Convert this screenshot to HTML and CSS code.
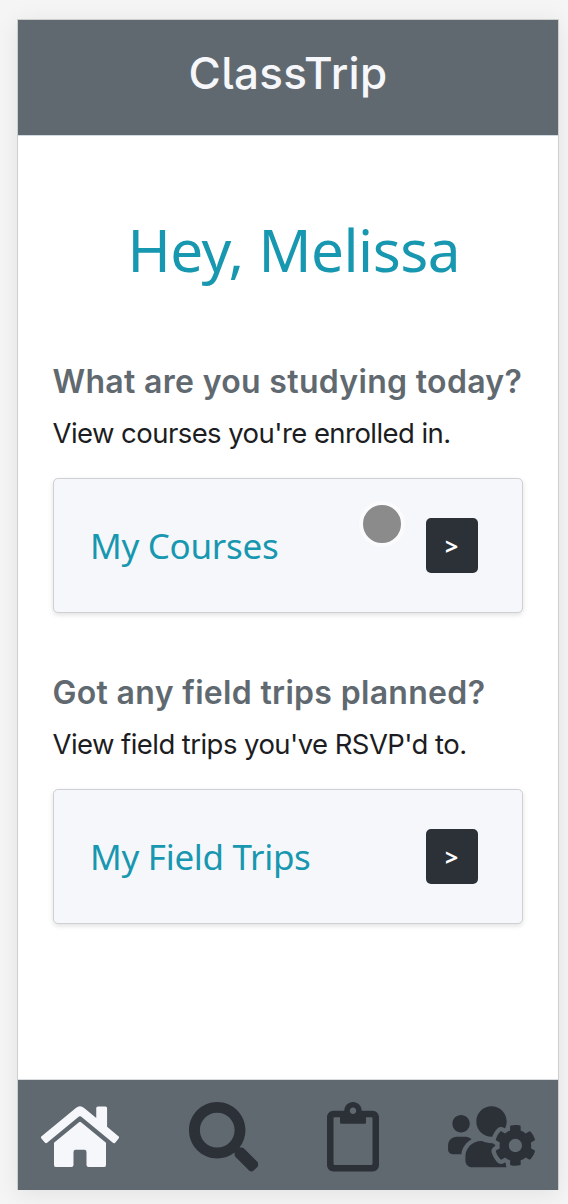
FILE: index.html
```html
<!DOCTYPE html>
<html lang="en">
<head>
<meta charset="utf-8">
<title>ClassTrip</title>
<link rel="stylesheet" href="styles.css">
</head>
<body>
<div class="phone">
  <header class="topbar"><span class="brand">ClassTrip</span></header>
  <main class="content">
    <h1 class="greeting">Hey, Melissa</h1>
    <section class="section">
      <h2 class="question">What are you studying today?</h2>
      <p class="hint">View courses you're enrolled in.</p>
      <div class="card">
        <span class="card-title">My Courses</span>
        <button class="go">&gt;</button>
        <span class="touch"></span>
      </div>
    </section>
    <section class="section">
      <h2 class="question">Got any field trips planned?</h2>
      <p class="hint">View field trips you've RSVP'd to.</p>
      <div class="card">
        <span class="card-title">My Field Trips</span>
        <button class="go">&gt;</button>
      </div>
    </section>
  </main>
  <nav class="tabs">
    <svg class="tab home" viewBox="0 0 576 512"><path d="M280.37 148.26L96 300.11V464a16 16 0 0 0 16 16l112.06-.29a16 16 0 0 0 15.92-16V368a16 16 0 0 1 16-16h64a16 16 0 0 1 16 16v95.64a16 16 0 0 0 16 16.05L464 480a16 16 0 0 0 16-16V300L295.67 148.26a12.19 12.19 0 0 0-15.3 0zM571.6 251.47L488 182.56V44.05a12 12 0 0 0-12-12h-56a12 12 0 0 0-12 12v72.61L318.47 43a48 48 0 0 0-61 0L4.34 251.47a12 12 0 0 0-1.6 16.9l25.5 31A12 12 0 0 0 45.15 301l235.22-193.74a12.19 12.19 0 0 1 15.3 0L530.9 301a12 12 0 0 0 16.9-1.6l25.5-31a12 12 0 0 0-1.7-16.93z"/></svg>
    <svg class="tab search" viewBox="0 0 512 512"><path d="M505 442.7L405.3 343c-4.5-4.5-10.6-7-17-7H372c27.6-35.3 44-79.7 44-128C416 93.1 322.9 0 208 0S0 93.1 0 208s93.1 208 208 208c48.3 0 92.7-16.4 128-44v16.3c0 6.4 2.5 12.5 7 17l99.7 99.7c9.4 9.4 24.6 9.4 33.9 0l28.3-28.3c9.4-9.4 9.4-24.6.1-34zM208 336c-70.7 0-128-57.2-128-128 0-70.7 57.2-128 128-128 70.7 0 128 57.2 128 128 0 70.7-57.2 128-128 128z"/></svg>
    <svg class="tab clipboard" viewBox="0 0 384 512"><path d="M336 64h-80c0-35.3-28.7-64-64-64s-64 28.7-64 64H48C21.5 64 0 85.5 0 112v352c0 26.5 21.5 48 48 48h288c26.5 0 48-21.5 48-48V112c0-26.5-21.5-48-48-48zM192 40c13.3 0 24 10.7 24 24s-10.7 24-24 24-24-10.7-24-24 10.7-24 24-24zm144 418c0 3.3-2.7 6-6 6H54c-3.3 0-6-2.7-6-6V118c0-3.3 2.7-6 6-6h42v36c0 6.6 5.4 12 12 12h168c6.6 0 12-5.4 12-12v-36h42c3.3 0 6 2.7 6 6v340z"/></svg>
    <svg class="tab users" viewBox="0 0 640 512"><path d="M610.5 341.3c2.6-14.1 2.6-28.5 0-42.6l25.8-14.9c3-1.7 4.3-5.2 3.3-8.5-6.7-21.6-18.2-41.2-33.2-57.4-2.3-2.5-6-3.1-9-1.4l-25.8 14.9c-10.9-9.3-23.4-16.5-36.9-21.3v-29.8c0-3.4-2.4-6.4-5.7-7.1-22.3-5-45-4.8-66.2 0-3.3.7-5.7 3.7-5.7 7.1v29.8c-13.5 4.8-26 12-36.9 21.3l-25.8-14.9c-2.9-1.7-6.7-1.1-9 1.4-15 16.2-26.5 35.8-33.2 57.4-1 3.3.4 6.8 3.3 8.5l25.8 14.9c-2.6 14.1-2.6 28.5 0 42.6l-25.8 14.9c-3 1.7-4.3 5.2-3.3 8.5 6.7 21.6 18.2 41.1 33.2 57.4 2.3 2.5 6 3.1 9 1.4l25.8-14.9c10.9 9.3 23.4 16.5 36.9 21.3v29.8c0 3.4 2.4 6.4 5.7 7.1 22.3 5 45 4.8 66.2 0 3.3-.7 5.7-3.7 5.7-7.1v-29.8c13.5-4.8 26-12 36.9-21.3l25.8 14.9c2.9 1.7 6.7 1.1 9-1.4 15-16.2 26.5-35.8 33.2-57.4 1-3.3-.4-6.8-3.3-8.5l-25.8-14.9zM496 368.5c-26.8 0-48.5-21.8-48.5-48.5s21.8-48.5 48.5-48.5 48.5 21.8 48.5 48.5-21.7 48.5-48.5 48.5zM96 224c35.3 0 64-28.7 64-64s-28.7-64-64-64-64 28.7-64 64 28.7 64 64 64zm224 32c1.9 0 3.7-.5 5.6-.6 8.3-21.7 20.5-42.1 36.3-59.2 7.4-8 17.9-12.6 28.9-12.6 6.9 0 13.7 1.8 19.6 5.3l7.9 4.6c.8-.5 1.6-.9 2.4-1.4 7-14.6 11.2-30.8 11.2-48 0-61.9-50.1-112-112-112S208 82.1 208 144c0 61.9 50.1 112 112 112zm105.2 194.5c-2.3-1.2-4.6-2.6-6.8-3.9-8.2 4.8-15.3 9.8-27.5 9.8-10.9 0-21.4-4.6-28.9-12.6-18.3-19.8-32.3-43.9-40.2-69.6-10.7-34.5 24.9-49.7 25.8-50.3-.1-2.6-.1-5.2 0-7.8l-7.9-4.6c-3.8-2.2-7-5-9.8-8.1-3.3.2-6.5.6-9.8.6-24.6 0-47.6-6-68.5-16h-8.3C179.6 288 128 339.6 128 403.2V432c0 26.5 21.5 48 48 48h255.4c-3.7-6-6.2-12.8-6.2-20.3v-9.2zM173.1 274.6C161.5 263.1 145.6 256 128 256H64c-35.3 0-64 28.7-64 64v32c0 17.7 14.3 32 32 32h65.9c6.3-47.4 34.9-87.3 75.2-109.4z"/></svg>
  </nav>
</div>
</body>
</html>
```
FILE: styles.css
```css
* { box-sizing: border-box; }
body {
  margin: 0;
  height: 1204px;
  padding: 19px 9px 14px 17px;
  background: #f5f5f5;
  overflow: hidden;
  font-family: Inter, "Liberation Sans", sans-serif;
}
.phone {
  height: 1171px;
  display: flex;
  flex-direction: column;
  background: #fff;
  border: 1px solid #cdcfce;
  border-bottom: 0;
  box-shadow: 0 4px 22px rgba(0, 0, 0, 0.08);
}
.topbar {
  height: 116px;
  background: #616970;
  border-bottom: 1px solid #d3dadf;
  text-align: center;
}
.brand {
  font-size: 44px;
  font-weight: 500;
  line-height: 106px;
  letter-spacing: 0.3px;
  font-feature-settings: "cv05";
  color: #f5f7fb;
}
.content {
  flex: 1;
  display: flex;
  flex-direction: column;
  padding: 0 35px 0 34.5px;
}
.greeting {
  margin: 73px 0 0;
  height: 82px;
  font: 400 58.5px/80px "Noto Sans", "Open Sans", sans-serif;
  letter-spacing: -0.5px;
  color: #1897b0;
  text-align: center;
  padding-left: 12px;
  white-space: nowrap;
}
.section {
  height: 311px;
  padding-top: 69px;
  white-space: nowrap;
}
.question {
  margin: 0;
  font-size: 32px;
  font-weight: 600;
  line-height: 44px;
  letter-spacing: 0.32px;
  color: #616970;
}
.hint {
  margin: 7px 0 0;
  font-size: 27.5px;
  line-height: 44px;
  letter-spacing: -0.56px;
  color: #1c1d22;
}
.card {
  position: relative;
  display: flex;
  align-items: center;
  justify-content: space-between;
  height: 135px;
  margin-top: 23px;
  padding: 0 44.4px 0 36.5px;
  background: #f5f7fb;
  border: 1px solid #cfd0d3;
  border-radius: 5px;
  box-shadow: 0 2px 5px rgba(0, 0, 0, 0.12);
}
.card-title {
  font: 400 35px/48px "Noto Sans", "Open Sans", sans-serif;
  letter-spacing: -0.3px;
  color: #1897b0;
}
.go {
  width: 52px;
  height: 55px;
  padding: 2px 0 0;
  border: 0;
  border-radius: 5px;
  background: #2c3138;
  color: #fff;
  font: 700 23px/53px "Noto Sans", sans-serif;
}
.touch {
  position: absolute;
  left: 305px;
  top: 22px;
  width: 46px;
  height: 46px;
  border: 4px solid #fbfbfd;
  border-radius: 50%;
  background: #8b8b8c;
}
.tabs {
  display: flex;
  height: 111px;
  padding: 22px 0 0 23px;
  border-top: 1px solid #d9dde0;
  background: #616970;
}
.tab {
  flex: none;
  height: 69.5px;
  fill: #2c3138;
}
.home { width: 78px; fill: #f5f7fb; }
.search { width: 69.5px; margin-left: 69.5px; }
.clipboard { width: 52px; margin-left: 69px; }
.users { width: 87px; margin-left: 69px; }
```
